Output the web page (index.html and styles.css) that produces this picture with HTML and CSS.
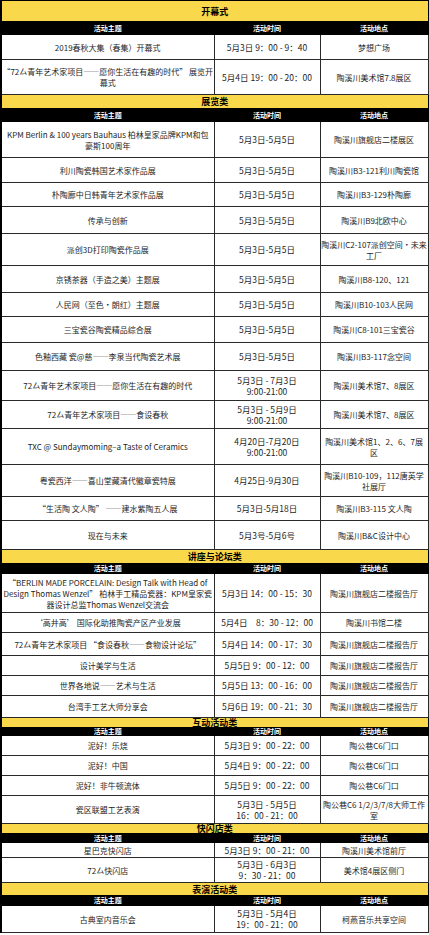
FILE: index.html
```html
<!DOCTYPE html>
<html lang="zh-CN">
<head>
<meta charset="utf-8">
<title>活动日程</title>
<link rel="stylesheet" href="styles.css">
</head>
<body>
<table class="sched">
  <colgroup><col class="c1"><col class="c2"><col class="c3"></colgroup>
  <tbody>
    <tr class="title h21"><td colspan="3">开幕式</td></tr>
    <tr class="head h13"><td>活动主题</td><td>活动时间</td><td>活动地点</td></tr>
    <tr class="h25"><td>2019春秋大集（春集）开幕式</td><td class="tm">5月3日 9：00 - 9：40</td><td>梦想广场</td></tr>
    <tr class="h35"><td>“72厶青年艺术家项目——愿你生活在有趣的时代” 展览开<br>幕式</td><td class="tm">5月4日 19：00 - 20：00</td><td>陶溪川美术馆7.8展区</td></tr>

    <tr class="title h14"><td colspan="3">展览类</td></tr>
    <tr class="head h13"><td>活动主题</td><td>活动时间</td><td>活动地点</td></tr>
    <tr class="h36"><td>KPM Berlin &amp; 100 years Bauhaus 柏林皇家品牌KPM和包<br>豪斯100周年</td><td class="tm">5月3日-5月5日</td><td>陶溪川旗舰店二楼展区</td></tr>
    <tr class="h25"><td>利川陶瓷韩国艺术家作品展</td><td class="tm">5月3日-5月5日</td><td>陶溪川B3-121利川陶瓷馆</td></tr>
    <tr class="h24"><td>朴陶廊中日韩青年艺术家作品展</td><td class="tm">5月3日-5月5日</td><td>陶溪川B3-129朴陶廊</td></tr>
    <tr class="h27"><td>传承与创新</td><td class="tm">5月3日-5月5日</td><td>陶溪川B9北欧中心</td></tr>
    <tr class="h32"><td>派创3D打印陶瓷作品展</td><td class="tm">5月3日-5月5日</td><td>陶溪川C2-107派创空间•未来<br>工厂</td></tr>
    <tr class="h27"><td>京锈茶器（手造之美）主题展</td><td class="tm">5月3日-5月5日</td><td>陶溪川B8-120、121</td></tr>
    <tr class="h24"><td>人民网（至色•朗红）主题展</td><td class="tm">5月3日-5月5日</td><td>陶溪川B10-103人民网</td></tr>
    <tr class="h26"><td>三宝瓷谷陶瓷精品综合展</td><td class="tm">5月3日-5月5日</td><td>陶溪川C8-101三宝瓷谷</td></tr>
    <tr class="h28"><td>色釉西藏 瓷@慈——李泉当代陶瓷艺术展</td><td class="tm">5月3日-5月5日</td><td>陶溪川B3-117念空间</td></tr>
    <tr class="h30"><td>72厶青年艺术家项目——愿你生活在有趣的时代</td><td class="tm">5月3日 - 7月3日<br>9:00-21:00</td><td>陶溪川美术馆7、8展区</td></tr>
    <tr class="h28"><td>72厶青年艺术家项目——食设春秋</td><td class="tm">5月3日 - 5月9日<br>9:00-21:00</td><td>陶溪川美术馆7、8展区</td></tr>
    <tr class="h36"><td>TXC @ Sundaymoming–a Taste of Ceramics</td><td class="tm">4月20日-7月20日<br>9:00-21:00</td><td>陶溪川美术馆1、2、6、7展<br>区</td></tr>
    <tr class="h32"><td>粤瓷西洋——喜山堂藏清代徽章瓷特展</td><td class="tm">4月25日-9月30日</td><td>陶溪川B10-109，112唐英学<br>社展厅</td></tr>
    <tr class="h24"><td>“生活陶 文人陶” ——建水紫陶五人展</td><td class="tm">5月3日-5月18日</td><td>陶溪川B3-115 文人陶</td></tr>
    <tr class="h29"><td>现在与未来</td><td class="tm">5月3号-5月6号</td><td>陶溪川B&amp;C设计中心</td></tr>

    <tr class="title h14"><td colspan="3">讲座与论坛类</td></tr>
    <tr class="head h10"><td>活动主题</td><td>活动时间</td><td>活动地点</td></tr>
    <tr class="h39"><td>“BERLIN MADE PORCELAIN: Design Talk with Head of<br>Design Thomas Wenzel” 柏林手工精品瓷器：KPM皇家瓷<br>器设计总监Thomas Wenzel交流会</td><td class="tm">5月3日 14：00 - 15：30</td><td>陶溪川旗舰店二楼报告厅</td></tr>
    <tr class="h20"><td>‘高井高’ 国际化助推陶瓷产区产业发展</td><td class="tm">5月4日　8：30 - 12：00</td><td>陶溪川书馆二楼</td></tr>
    <tr class="h23"><td>72厶青年艺术家项目 “食设春秋——食物设计论坛”</td><td class="tm">5月4日 14：00 - 17：30</td><td>陶溪川旗舰店二楼报告厅</td></tr>
    <tr class="h20"><td>设计美学与生活</td><td class="tm">5月5日 9：00 - 12：00</td><td>陶溪川旗舰店二楼报告厅</td></tr>
    <tr class="h20"><td>世界各地说——艺术与生活</td><td class="tm">5月5日 13：00 - 16：00</td><td>陶溪川旗舰店二楼报告厅</td></tr>
    <tr class="h22"><td>台湾手工艺大师分享会</td><td class="tm">5月6日 19：00 - 21：30</td><td>陶溪川旗舰店二楼报告厅</td></tr>

    <tr class="title h10"><td colspan="3">互动活动类</td></tr>
    <tr class="head h7"><td>活动主题</td><td>活动时间</td><td>活动地点</td></tr>
    <tr class="h20"><td>泥好！乐烧</td><td class="tm">5月3日 9：00 - 22：00</td><td>陶公巷C6门口</td></tr>
    <tr class="h20"><td>泥好！中国</td><td class="tm">5月4日 9：00 - 22：00</td><td>陶公巷C6门口</td></tr>
    <tr class="h20"><td>泥好！非牛顿流体</td><td class="tm">5月5日 9：00 - 22：00</td><td>陶公巷C6门口</td></tr>
    <tr class="h28"><td>瓷区联盟工艺表演</td><td class="tm">5月3日 - 5月5日<br>16：00 - 21：00</td><td>陶公巷C6 1/2/3/7/8大师工作<br>室</td></tr>

    <tr class="title h9"><td colspan="3">快闪店类</td></tr>
    <tr class="head h9"><td>活动主题</td><td>活动时间</td><td>活动地点</td></tr>
    <tr class="h15"><td>星巴克快闪店</td><td class="tm">5月3日 9：00 - 21：00</td><td>陶溪川美术馆前厅</td></tr>
    <tr class="h25"><td>72厶快闪店</td><td class="tm">5月3日 - 6月3日<br>9：30 - 21：00</td><td>美术馆4展区侧门</td></tr>

    <tr class="title h13"><td colspan="3">表演活动类</td></tr>
    <tr class="head h10"><td>活动主题</td><td>活动时间</td><td>活动地点</td></tr>
    <tr class="h27"><td>古典室内音乐会</td><td class="tm">5月3日 - 5月4日<br>19：00 - 21：00</td><td>柯燕音乐共享空间</td></tr>
  </tbody>
</table>
</body>
</html>
```

FILE: styles.css
```css
html, body {
  margin: 0;
  padding: 0;
  background: #ffffff;
}

.sched {
  width: 427px;
  border-collapse: collapse;
  table-layout: fixed;
  font-family: "Noto Sans CJK SC", "Noto Sans", sans-serif;
  font-size: 8px;
  color: #1e1e1e;
  border-left: 2px solid #000;
}

.c1 { width: 213px; }
.c2 { width: 106px; }
.c3 { width: 108px; }

.sched td {
  border: 1px solid #2a2a2a;
  padding: 0;
  text-align: center;
  vertical-align: middle;
  line-height: 11px;
  white-space: nowrap;
  overflow: hidden;
}

.sched td.tm { font-size: 8.5px; }

.title td {
  background: #f9d84b;
  font-weight: 700;
  font-size: 9px;
  line-height: 9px;
  color: #000;
  border-color: #000;
}

.head td {
  background: #000;
  color: #fff;
  font-weight: 700;
  font-size: 7px;
  line-height: 7px;
  border-color: #000;
}

.h7 { height: 7px; }
.h9 { height: 9px; }
.h10 { height: 10px; }
.h13 { height: 13px; }
.h14 { height: 14px; }
.h15 { height: 15px; }
.h20 { height: 20px; }
.h21 { height: 21px; }
.h22 { height: 22px; }
.h23 { height: 23px; }
.h24 { height: 24px; }
.h25 { height: 25px; }
.h26 { height: 26px; }
.h27 { height: 27px; }
.h28 { height: 28px; }
.h29 { height: 29px; }
.h30 { height: 30px; }
.h32 { height: 32px; }
.h35 { height: 35px; }
.h36 { height: 36px; }
.h39 { height: 39px; }
```
